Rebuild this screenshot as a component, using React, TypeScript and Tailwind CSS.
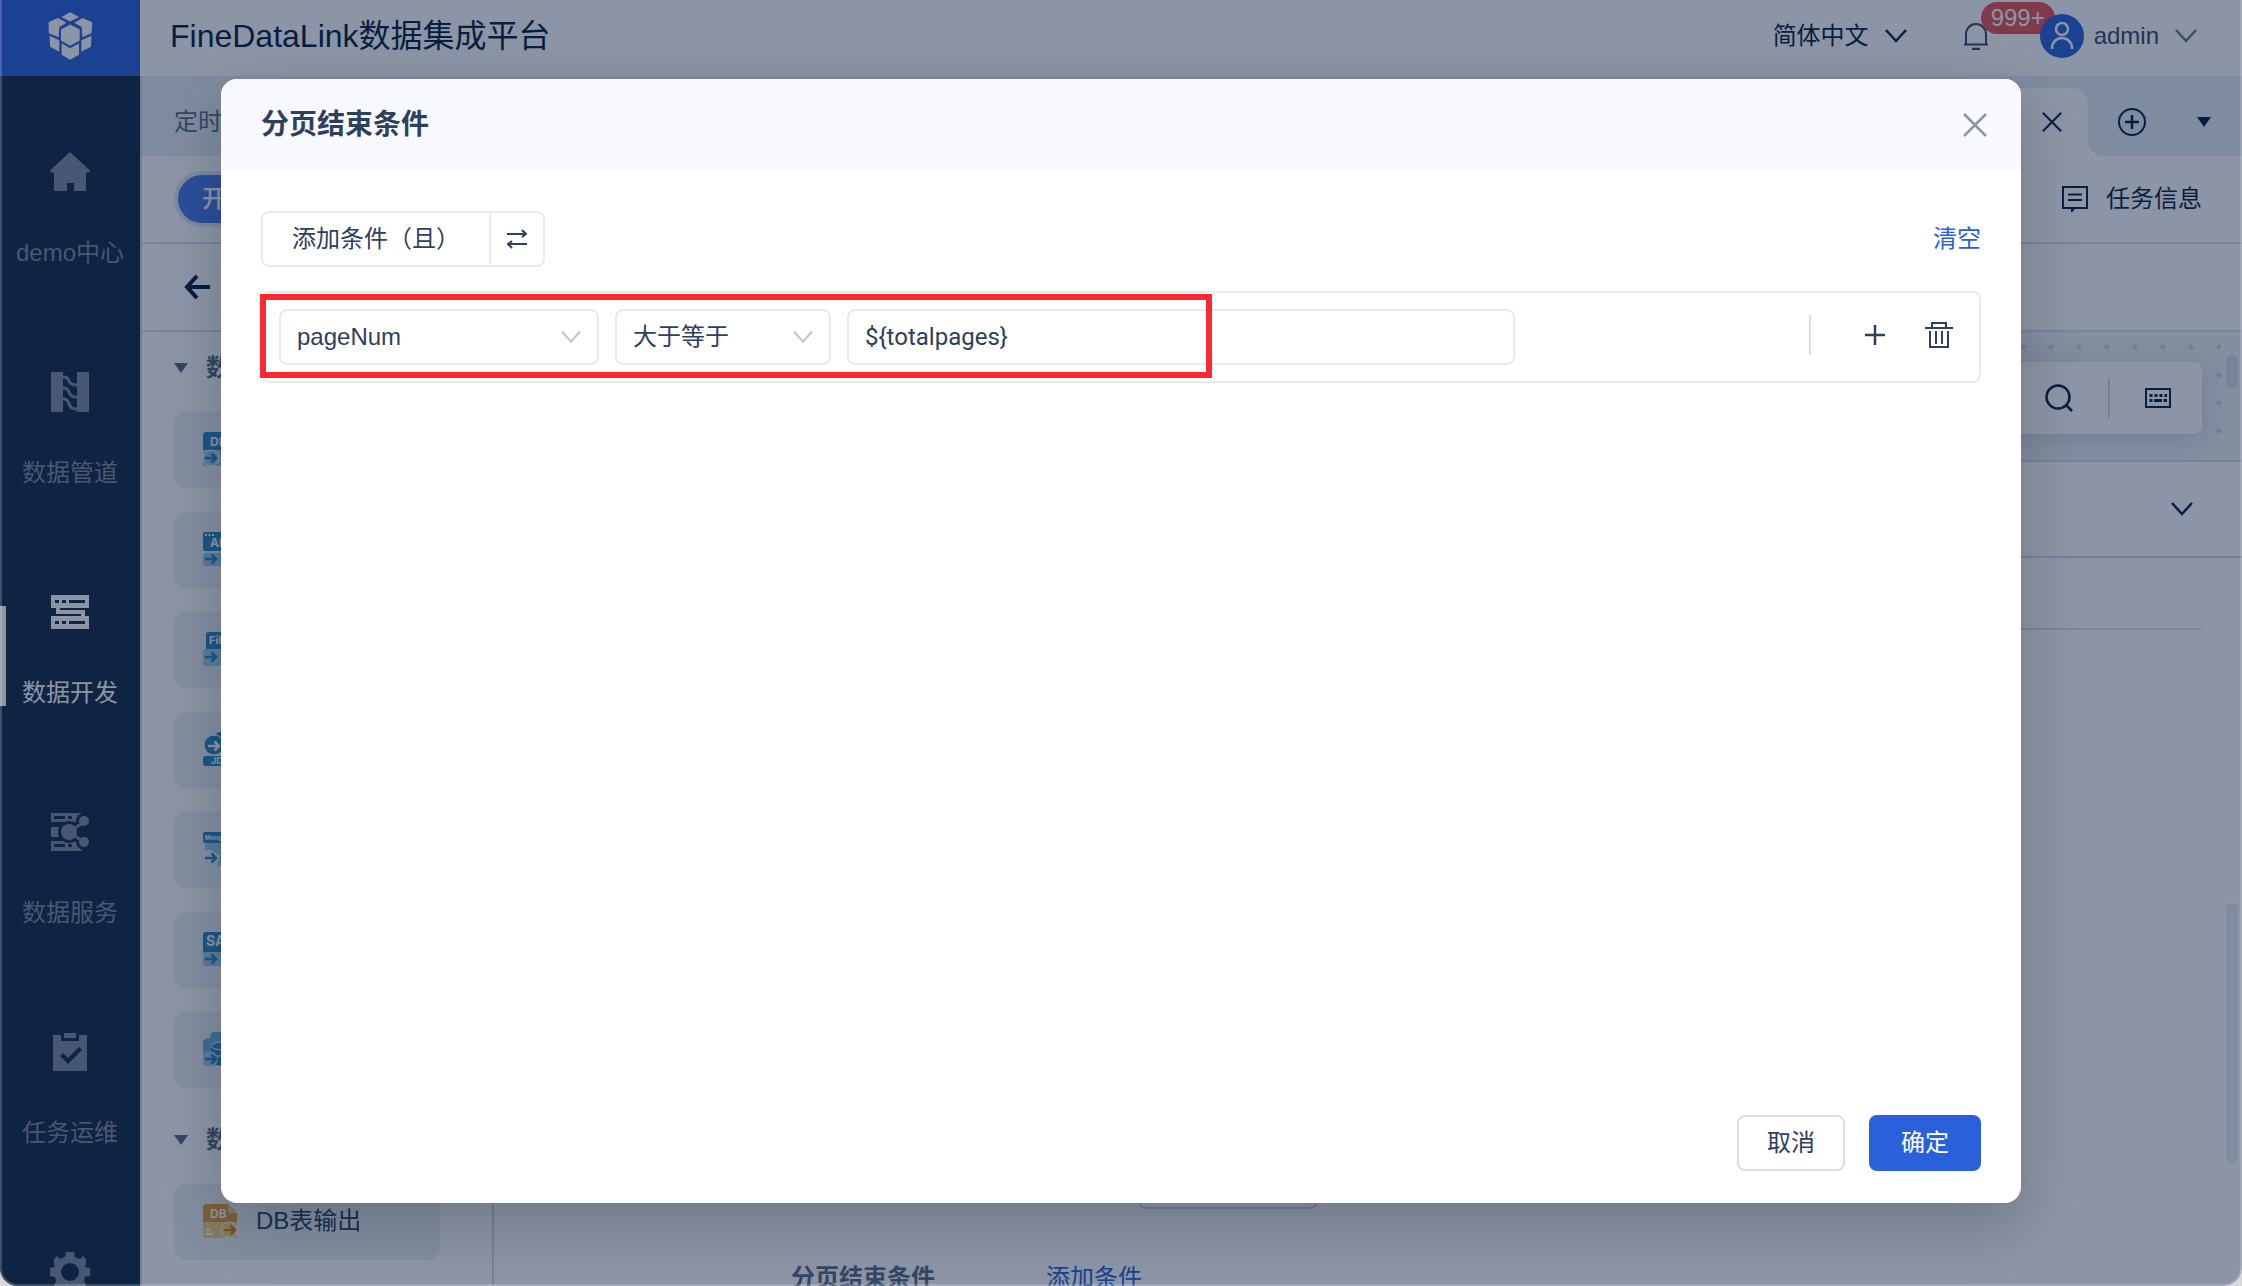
import type { ReactNode } from 'react'

interface NavItem {
  label: string
  icon: ReactNode
  active?: boolean
}

function Logo() {
  return (
    <svg viewBox="52 35 136 146" className="h-12 w-[45px] fill-white">
      <path d="M119 36 146 50 119 64 92 50Z" />
      <path d="M53 66 82 53 108 68 86 81 84 112 54 100Z" />
      <path d="M186 66 157 53 131 68 154 81 156 112 184 100Z" />
      <path d="M119 73 148 88V122L119 138 91 122V88Z" />
      <path d="M56 107 86 121V156L58 141Z" />
      <path d="M184 107 153 121V156L182 141Z" />
      <path d="M93 130 119 145 146 130V165L119 180 93 165Z" />
    </svg>
  )
}

function HomeIcon() {
  return (
    <svg viewBox="0 0 40 40" className="size-10 fill-current">
      <path d="M20 0 40 18.500 39 20.500H36V39H24V31H17V39H4V20.500H1L0 18.500Z" />
    </svg>
  )
}

function PipelineIcon() {
  return (
    <svg viewBox="0 0 40 40" className="size-10">
      <path d="M1 0H13V40H1ZM27 0H39V40H27Z" fill="currentColor" />
      <path
        d="M12 5H14C21 5 17 13 25 13H28M12 16H14C21 16 17 25 25 25H28M12 27H14C21 27 17 37 25 37H28"
        fill="none"
        stroke="currentColor"
        strokeWidth="3"
      />
    </svg>
  )
}

function DevelopIcon() {
  return (
    <svg viewBox="0 0 40 40" className="size-10 fill-current">
      <path
        fillRule="evenodd"
        d="M1 3H39V16H35V24H39V37H1V24H31V22H6V16H1ZM5 8V11H9V8ZM12 8V11H16V8ZM19 8V11H35V8ZM5 29V32H9V29ZM12 29V32H16V29ZM19 29V32H35V29ZM10 16V18H35V16Z"
      />
    </svg>
  )
}

function ServiceIcon() {
  return (
    <svg viewBox="0 0 40 40" className="size-10 fill-current">
      <path
        fillRule="evenodd"
        d="M1 1H32V10H1ZM4 4V7H15V4ZM18 4V7H22V4ZM1 15H12V25H1ZM1 29H32V39H1ZM4 32V35H15V32ZM18 32V35H22V32Z"
      />
      {/* halo keeps the share mark clear of the server rows */}
      <g className="fill-[#162844] stroke-[#162844]" strokeWidth="6">
        <path d="M19 20 34 10M19 20 34 30" strokeWidth="8" />
        <circle cx="19" cy="20" r="8" />
        <circle cx="34" cy="9" r="5" />
        <circle cx="34" cy="30" r="5" />
      </g>
      <path d="M19 20 34 10M19 20 34 30" stroke="currentColor" strokeWidth="3" />
      <circle cx="19" cy="20" r="8" />
      <circle cx="34" cy="9" r="5" />
      <circle cx="34" cy="30" r="5" />
    </svg>
  )
}

function OperationIcon() {
  return (
    <svg viewBox="0 0 40 40" className="size-10 fill-current">
      <path d="M14 1H26V6H14Z" />
      <path
        fillRule="evenodd"
        d="M3 3H11V9H29V3H37V39H3ZM10 24 18 32 32 18 29 15 18 26 13 21Z"
      />
    </svg>
  )
}

function GearIcon() {
  return (
    <svg viewBox="0 0 40 40" className="size-10 fill-current">
      <path
        fillRule="evenodd"
        d="M16 0H24L25 5 30 7 33 4 36 7V12L35 15 40 16V24L35 25 34 29 36 33 33 37 29 35 24 36V40H16L15 36 11 35 7 37 4 33 6 29 5 25 0 24V16L5 15 4 12V7L7 4 10 7 15 5ZM20 11A9 9 0 1 0 20 29 9 9 0 1 0 20 11Z"
      />
    </svg>
  )
}

function ChevronDown({ className }: { className: string }) {
  return (
    <svg viewBox="0 0 22 14" fill="none" stroke="currentColor" strokeWidth="2.500" className={className}>
      <path d="M1 1 11 12 21 1" />
    </svg>
  )
}

function CloseIcon({ className }: { className: string }) {
  return (
    <svg viewBox="0 0 24 24" fill="none" stroke="currentColor" strokeWidth="2.500" className={className}>
      <path d="M1 1 23 23M23 1 1 23" />
    </svg>
  )
}

function Triangle() {
  return (
    <svg viewBox="0 0 14 10" className="w-[14px] h-[10px] fill-current">
      <path d="M0 0H14L7 10Z" />
    </svg>
  )
}

const DARK = '#2a8ac8'
const LIGHT = '#9dd0ea'

// small right arrow shared by the data source icons
function Arrow({ y, color = DARK }: { y: number; color?: string }) {
  return (
    <g transform={`translate(2 ${y})`} stroke={color} strokeWidth="2.500" fill="none">
      <path d="M0 5H11M6.500 .5 11 5 6.500 9.500" />
    </g>
  )
}

function Caption({ x, y, size, children }: { x: number; y: number; size: number; children: string }) {
  return (
    <text x={x} y={y} fontSize={size} fontWeight="700" fill="#fff" className="font-['Inter',sans-serif]">
      {children}
    </text>
  )
}

const sourceIcons: { name: string; drawing: ReactNode }[] = [
  {
    name: 'DB表输入',
    drawing: (
      <>
        <path d="M2 0H26L34 8V18H0V2Z" fill={DARK} />
        <path d="M0 18H34V34H0Z" fill={LIGHT} />
        <circle cx="8" cy="26" r="8" fill={LIGHT} stroke="#fff" />
        <Caption x={7} y={14} size={12}>DB</Caption>
        <Arrow y={21} />
      </>
    ),
  },
  {
    name: 'API输入',
    drawing: (
      <>
        <rect width="34" height="19" rx="2" fill={DARK} />
        <rect y="21" width="34" height="13" rx="2" fill={LIGHT} />
        <path d="M2 3H11" stroke="#fff" strokeWidth="2" strokeDasharray="2 1.500" />
        <Caption x={7} y={15} size={12}>API</Caption>
        <Arrow y={22} />
      </>
    ),
  },
  {
    name: '文件输入',
    drawing: (
      <>
        <rect x="3" width="31" height="20" rx="2" fill={DARK} />
        <rect y="17" width="34" height="17" rx="2" fill={LIGHT} />
        <Caption x={6} y={12} size={11}>File</Caption>
        <Arrow y={20} />
      </>
    ),
  },
  {
    name: '简道云输入',
    drawing: (
      <>
        <circle cx="20" cy="8" r="9" fill={DARK} />
        <circle cx="11" cy="13" r="10" fill={DARK} stroke="#fff" />
        <rect y="24" width="34" height="10" rx="3" fill={DARK} />
        <g transform="translate(3 0)">
          <Arrow y={9} color="#fff" />
        </g>
        <Caption x={8} y={32} size={9}>JDY</Caption>
      </>
    ),
  },
  {
    name: 'MongoDB输入',
    drawing: (
      <>
        <path d="M2 10H34V34H14L17 24 8 18H2Z" fill={LIGHT} />
        <rect width="34" height="11" rx="2" fill={DARK} />
        <Caption x={2} y={8} size={6}>MongoDB</Caption>
        <Arrow y={21} />
      </>
    ),
  },
  {
    name: 'SAP ERP输入',
    drawing: (
      <>
        <rect width="34" height="34" rx="2" fill={LIGHT} />
        <path d="M2 0H34V20H0V2Z" fill={DARK} />
        <Caption x={3} y={14} size={14}>SAP</Caption>
        <Arrow y={22} />
      </>
    ),
  },
  {
    name: '服务器数据集',
    drawing: (
      <>
        <path d="M6 24A9 9 0 0 1 7 6 10 10 0 0 1 27 6 9 9 0 0 1 28 24Z" fill="#6db4de" />
        <path d="M8 14V30C8 35 34 35 34 30V14Z" fill={DARK} />
        <ellipse cx="21" cy="14" rx="13" ry="4" fill={DARK} stroke="#fff" />
        <path d="M10 24H34" stroke="#fff" />
        <circle cx="7" cy="27" r="8" fill={LIGHT} />
        <Arrow y={22} />
      </>
    ),
  },
]

function TableOutputIcon() {
  return (
    <svg viewBox="0 0 34 34" className="size-[34px]">
      <path d="M2 0H25L34 9V18H0V2Z" fill="#e79a35" />
      <path d="M25 0 34 9H25Z" fill="#f7d087" />
      <path d="M0 18H34V34H2L0 32Z" fill="#f7cf80" />
      <path d="M3 26H7M3 30H10" stroke="#fff" strokeWidth="2" />
      <circle cx="26" cy="26" r="8" fill="#f7cf80" stroke="#fff" />
      <g transform="translate(19 0)">
        <Arrow y={21} color="#d98517" />
      </g>
      <Caption x={7} y={14} size={12}>DB</Caption>
    </svg>
  )
}

const navItems: NavItem[] = [
  { label: 'demo中心', icon: <HomeIcon /> },
  { label: '数据管道', icon: <PipelineIcon /> },
  { label: '数据开发', icon: <DevelopIcon />, active: true },
  { label: '数据服务', icon: <ServiceIcon /> },
  { label: '任务运维', icon: <OperationIcon /> },
]

function Header() {
  return (
    <header className="flex h-[76px] shrink-0 bg-white">
      <div className="flex w-[140px] items-center justify-center bg-[#2a60dc] pb-1">
        <Logo />
      </div>
      <div className="flex flex-1 items-center pb-1">
        <h1 className="flex-1 pl-[30px] text-[32px] leading-10 text-[#091e40]">FineDataLink数据集成平台</h1>
        <button className="flex items-center gap-4 text-2xl leading-8 text-[#091e40]">
          简体中文
          <ChevronDown className="w-[22px] h-[14px]" />
        </button>
        <button aria-label="消息" className="relative ml-14 text-[#3a4b66]">
          <svg viewBox="0 0 26 28" className="h-7 w-[26px]" fill="none" stroke="currentColor" strokeWidth="2">
            <path d="M1 22.500H25M3 22V12A10 10 0 0 1 23 12V22" />
            <path d="M9 27H17" strokeWidth="2.500" />
          </svg>
          <span className="absolute -top-5 left-[18px] flex h-8 items-center rounded-full bg-[#ec5355] px-[10px] text-2xl leading-8 text-white">
            999+
          </span>
        </button>
        <button className="relative ml-[51px] mr-[45px] flex items-center gap-[10px] text-2xl leading-8 text-[#3a4b66]">
          <svg viewBox="0 0 44 44" className="size-11">
            <circle cx="22" cy="22" r="22" fill="#2a60dc" />
            <g fill="none" stroke="#fff" strokeWidth="2.500">
              <circle cx="22" cy="15" r="6" />
              <path d="M12 35V34A10 10 0 0 1 32 34V35" />
            </g>
          </svg>
          admin
          <ChevronDown className="ml-[6px] w-[22px] h-[14px] text-[#6b788e]" />
        </button>
      </div>
    </header>
  )
}

function Sidebar() {
  return (
    <nav className="flex w-[140px] shrink-0 flex-col overflow-hidden bg-[#162844] pt-[30px]">
      {navItems.map((item) => (
        <a
          key={item.label}
          href="#"
          className={
            item.active
              ? 'relative flex h-[220px] shrink-0 flex-col items-center gap-[45px] pt-[46px] text-2xl leading-8 text-white'
              : 'flex h-[220px] shrink-0 flex-col items-center gap-[45px] pt-[46px] text-2xl leading-8 text-[#808ca2]'
          }
        >
          {item.active && <span className="absolute left-0 top-[60px] h-[100px] w-[6px] bg-white" />}
          {item.icon}
          {item.label}
        </a>
      ))}
      <a href="#" aria-label="管理系统" className="flex shrink-0 justify-center pt-[46px] text-[#808ca2]">
        <GearIcon />
      </a>
    </nav>
  )
}

function TabBar() {
  return (
    <div className="flex h-20 shrink-0 bg-[#e8ecf4] text-[#091e40]">
      <span className="flex-1 self-center pl-8 pt-3 text-2xl leading-8 text-[#5c6a82]">定时任务</span>
      <div className="flex h-[68px] w-[320px] items-center justify-end self-end rounded-t-2xl bg-white pr-[26px]">
        <button aria-label="关闭标签">
          <CloseIcon className="size-5" />
        </button>
      </div>
      <div className="w-[154px] bg-white">
        <div className="flex h-full items-center gap-[51px] rounded-bl-2xl bg-[#e8ecf4] pl-[30px] pt-3">
          <button aria-label="新建标签">
            <svg viewBox="0 0 28 28" className="size-7" fill="none" stroke="currentColor" strokeWidth="2">
              <circle cx="14" cy="14" r="13" />
              <path d="M7 14H21M14 7V21" strokeWidth="2.500" />
            </svg>
          </button>
          <button aria-label="更多标签">
            <Triangle />
          </button>
        </div>
      </div>
    </div>
  )
}

function Palette() {
  return (
    <aside className="flex w-[352px] shrink-0 flex-col gap-7 overflow-hidden border-r-2 border-[#d5dae6] px-8 pt-3 text-2xl leading-8">
      <section className="shrink-0">
        <h3 className="mb-5 flex h-12 items-center gap-[18px] font-bold text-[#5c6a82]">
          <Triangle />
          数据输入
        </h3>
        <ul className="flex flex-col gap-6">
          {sourceIcons.map((source) => (
            <li key={source.name} className="flex h-[76px] w-[266px] items-center gap-[19px] rounded-xl bg-[#eff1f6] pb-[2px] pl-[29px] text-[#2e405d]">
              <svg viewBox="0 0 34 34" className="size-[34px] shrink-0">
                {source.drawing}
              </svg>
              {source.name}
            </li>
          ))}
        </ul>
      </section>
      <section className="shrink-0">
        <h3 className="mb-5 flex h-12 items-center gap-[18px] font-bold text-[#5c6a82]">
          <Triangle />
          数据输出
        </h3>
        <div className="flex h-[76px] w-[266px] items-center gap-[19px] rounded-xl bg-[#eff1f6] pb-[2px] pl-[29px] text-[#2e405d]">
          <TableOutputIcon />
          DB表输出
        </div>
      </section>
    </aside>
  )
}

function Canvas() {
  return (
    <div className="relative flex h-[130px] shrink-0 items-center justify-end border-b-2 border-[#dbdfe9] bg-[#f0f1f7] bg-[linear-gradient(to_top,#f0f1f7_8px,transparent_8px),radial-gradient(circle,#cdd2de_2px,transparent_3px)] bg-[size:100%_100%,28px_28px] bg-[position:0_0,3px_1px] pr-10 pt-1">
      <div className="flex h-[72px] items-center rounded-lg bg-white pl-16 pr-[31px] text-[#091e40] shadow-[0_4px_24px_rgba(9,30,64,0.14)]">
        <button aria-label="搜索">
          <svg viewBox="0 0 28 28" className="size-7" fill="none" stroke="currentColor" strokeWidth="2.500">
            <circle cx="13" cy="13" r="11.500" />
            <path d="M21 21 27 27" />
          </svg>
        </button>
        <span className="mx-[35px] h-10 w-[2px] bg-[#d5dae6]" />
        <button aria-label="快捷键">
          <svg viewBox="0 0 26 20" className="h-5 w-[26px]" fill="none" stroke="currentColor">
            <rect x="1" y="1" width="24" height="18" strokeWidth="2" />
            <path d="M4.500 7.500H22" strokeWidth="3" strokeDasharray="3 2" />
            <path d="M4.500 12.500H7.500M9 12.500H17M18.500 12.500H22" strokeWidth="3" />
          </svg>
        </button>
      </div>
      <span className="absolute right-1 top-[23px] h-[33px] w-3 rounded-full bg-[#dadfe9]" />
    </div>
  )
}

function Workspace() {
  return (
    <main className="flex min-w-0 flex-1 flex-col border-l-2 border-[#d5dae6] bg-white">
      <TabBar />
      <div className="flex h-[88px] shrink-0 items-center justify-between border-b-2 border-[#dbe0ec] pl-8 pr-10 text-2xl leading-8">
        <button className="rounded-full border-4 border-[#e3e8f4] bg-[#4a7bea] px-6 py-2 font-medium text-white">开发模式</button>
        <button className="flex items-center gap-[18px] text-[#091e40]">
          <svg viewBox="0 0 26 26" className="size-[26px]" fill="none" stroke="currentColor" strokeWidth="2">
            <path d="M1 1H25V22H12L10 25V22H1Z" />
            <path d="M6 8.500H20M6 14H20" />
          </svg>
          任务信息
        </button>
      </div>
      <div className="flex h-[88px] shrink-0 items-center border-b-2 border-[#dbe0ec] pl-[42px]">
        <button aria-label="返回">
          <svg viewBox="0 0 26 24" className="h-6 w-[26px] text-[#091e40]" fill="none" stroke="currentColor" strokeWidth="4">
            <path d="M2 12H26M13 1 3 12 13 23" />
          </svg>
        </button>
      </div>
      <div className="flex min-h-0 flex-1">
        <Palette />
        <div className="relative flex min-w-0 flex-1 flex-col overflow-hidden">
          <Canvas />
          <div className="flex h-24 shrink-0 items-center justify-end border-b-2 border-[#d5dae6] pr-[49px] text-[#091e40]">
            <button aria-label="收起">
              <ChevronDown className="w-[22px] h-[14px]" />
            </button>
          </div>
          <div className="mx-10 h-[72px] shrink-0 border-b-2 border-[#e1e5ed]" />
          <div className="flex shrink-0 flex-col gap-[53px] pl-[297px] pt-[523px] text-2xl leading-8">
            <button aria-label="添加参数" className="ml-[347px] h-14 w-[180px] rounded-lg border-2 border-[#d5d9e6]" />
            <div className="flex gap-[111px]">
              <span className="font-bold text-[#5c6a82]">分页结束条件</span>
              <a href="#" className="text-[#2a60dc]">添加条件</a>
            </div>
          </div>
          <span className="absolute bottom-[123px] right-1 h-[260px] w-3 rounded-full bg-[#ebedf3]" />
        </div>
      </div>
    </main>
  )
}

function ConditionRow() {
  return (
    <div className="relative flex items-center gap-4 rounded-lg border-2 border-[#e8eaf0] p-4 pr-[26px]">
      <div className="relative w-[320px]">
        <select aria-label="参数" className="h-14 w-full appearance-none rounded-lg border-2 border-[#e8eaf0] bg-white px-4">
          <option>pageNum</option>
        </select>
        <ChevronDown className="pointer-events-none absolute right-[18px] top-[21px] h-[14px] w-5 text-[#c3c8d2]" />
      </div>
      <div className="relative w-[216px]">
        <select aria-label="比较方式" className="h-14 w-full appearance-none rounded-lg border-2 border-[#e8eaf0] bg-white px-4">
          <option>大于等于</option>
        </select>
        <ChevronDown className="pointer-events-none absolute right-[18px] top-[21px] h-[14px] w-5 text-[#c3c8d2]" />
      </div>
      <input
        aria-label="值"
        defaultValue="${totalpages}"
        className="h-14 w-[668px] rounded-lg border-2 border-[#e8eaf0] px-4 font-['Roboto',sans-serif]"
      />
      <div className="ml-auto flex items-center pb-1">
        <span className="h-10 w-[2px] bg-[#d9dde6]" />
        <button aria-label="添加" className="ml-[54px]">
          <svg viewBox="0 0 20 20" className="size-5" fill="none" stroke="currentColor" strokeWidth="2.500">
            <path d="M0 10H20M10 0V20" />
          </svg>
        </button>
        <button aria-label="删除" className="ml-10">
          <svg viewBox="0 0 28 26" className="h-[26px] w-7" fill="none" stroke="currentColor" strokeWidth="2">
            <path d="M0 6H28M7 6V1H21V6M5 9V25H23V9M11 9V22M17 9V22" />
          </svg>
        </button>
      </div>
      <span className="pointer-events-none absolute -left-[3px] top-px h-[84px] w-[952px] border-[6px] border-[#ff282d]" />
    </div>
  )
}

function ConditionDialog() {
  return (
    <div
      role="dialog"
      aria-label="分页结束条件"
      className="flex min-w-0 flex-1 flex-col overflow-hidden rounded-2xl bg-white text-2xl leading-8 text-[#2e405d] shadow-[0_20px_60px_rgba(0,0,0,0.2)]"
    >
      <div className="flex h-[92px] items-center justify-between bg-[#f8f9fe] pl-10 pr-[34px]">
        <h2 className="text-[28px] font-bold leading-10">分页结束条件</h2>
        <button aria-label="关闭" className="text-[#8a95a8]">
          <CloseIcon className="size-6" />
        </button>
      </div>
      <div className="flex flex-1 flex-col gap-6 px-10 pt-10">
        <div className="flex items-center justify-between">
          <div className="flex h-14 rounded-lg border-2 border-[#e8eaf0]">
            <button className="w-[228px] border-r-2 border-[#e8eaf0]">添加条件（且）</button>
            <button aria-label="切换" className="flex w-[52px] items-center justify-center">
              <svg viewBox="0 0 20 20" className="size-5" fill="none" stroke="currentColor" strokeWidth="2">
                <path d="M0 5H19M15 1 19 5 15 8M20 15H1M5 12 1 15 5 19" />
              </svg>
            </button>
          </div>
          <button className="text-[#2a60dc]">清空</button>
        </div>
        <ConditionRow />
      </div>
      <div className="flex justify-end gap-6 px-10 pb-8">
        <button className="h-14 w-[108px] rounded-lg border-2 border-[#dadee8]">取消</button>
        <button className="h-14 w-28 rounded-lg bg-[#2a60dc] text-white">确定</button>
      </div>
    </div>
  )
}

export default function App() {
  return (
    <div className="h-screen bg-[#d8d8da] font-['Liberation_Sans','Noto_Sans_CJK_SC',sans-serif]">
      <div className="relative flex h-full flex-col overflow-hidden rounded-b-[18px]">
        <Header />
        <div className="flex min-h-0 flex-1">
          <Sidebar />
          <Workspace />
        </div>
        <div className="absolute inset-0 flex rounded-b-[18px] border-x-2 border-b-2 border-white/20 bg-[#091e40]/47 px-[219px] pb-[81px] pt-[79px]">
          <ConditionDialog />
        </div>
      </div>
    </div>
  )
}
